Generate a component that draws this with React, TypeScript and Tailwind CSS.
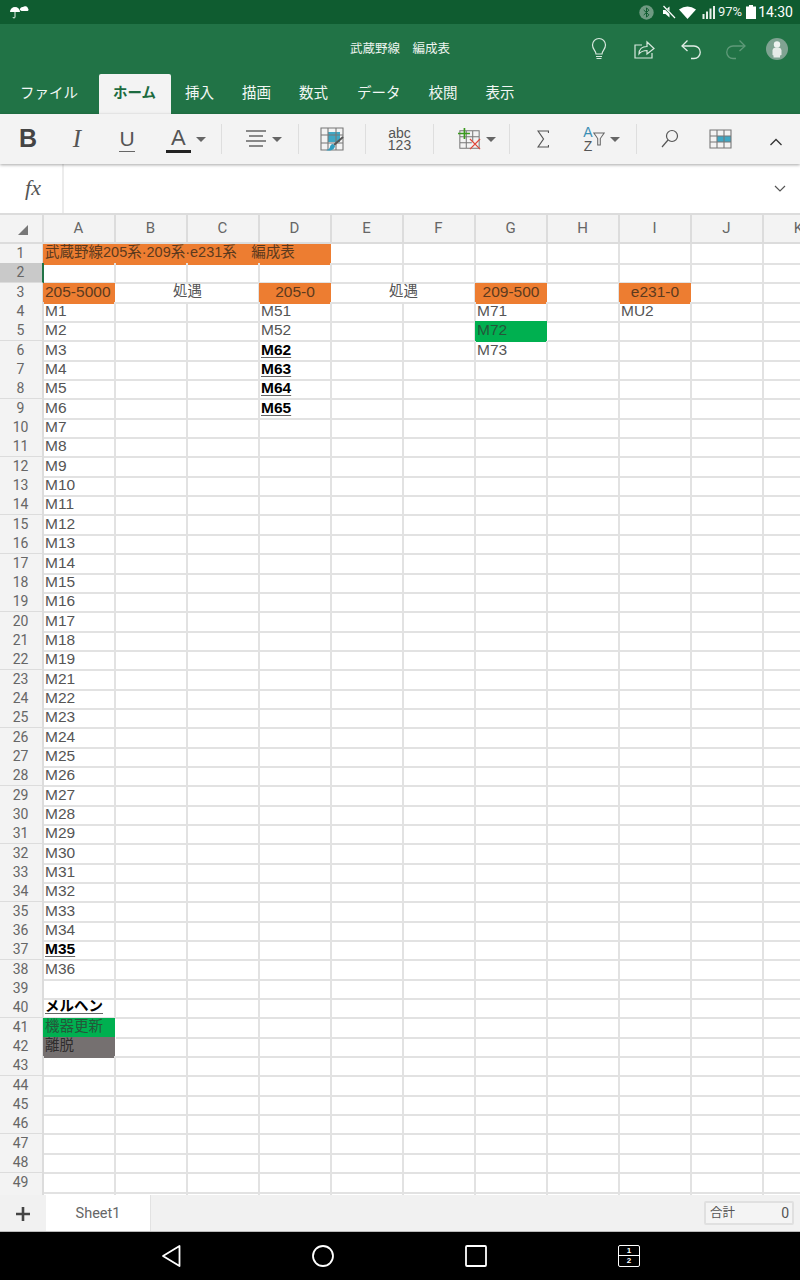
import type { ReactNode } from "react";

const sans = "font-['Liberation_Sans','Noto_Sans_CJK_JP',sans-serif]";
const ui = "font-['Roboto','Noto_Sans_CJK_JP',sans-serif]";

const COLUMNS = ["A", "B", "C", "D", "E", "F", "G", "H", "I", "J", "K"];
const TABS = ["挿入", "描画", "数式", "データ", "校閲", "表示"];

type Cell = {
  text: string;
  span?: number;
  kind?: "orange" | "green" | "gray" | "bold" | "plain";
  center?: boolean;
  cjk?: boolean;
};

const cells: Record<string, Cell> = {
  A1: { text: "武蔵野線205系·209系·e231系　編成表", span: 4, kind: "orange", cjk: true },
  A3: { text: "205-5000", kind: "orange" },
  B3: { text: "処遇", span: 2, center: true, cjk: true },
  D3: { text: "205-0", kind: "orange", center: true },
  E3: { text: "処遇", span: 2, center: true, cjk: true },
  G3: { text: "209-500", kind: "orange", center: true },
  I3: { text: "e231-0", kind: "orange", center: true },
  D4: { text: "M51" },
  D5: { text: "M52" },
  D6: { text: "M62", kind: "bold" },
  D7: { text: "M63", kind: "bold" },
  D8: { text: "M64", kind: "bold" },
  D9: { text: "M65", kind: "bold" },
  G4: { text: "M71" },
  G5: { text: "M72", kind: "green" },
  G6: { text: "M73" },
  I4: { text: "MU2" },
  A40: { text: "メルヘン", kind: "bold", cjk: true },
  A41: { text: "機器更新", kind: "green", cjk: true },
  A42: { text: "離脱", kind: "gray", cjk: true },
};

// M1〜M19, M21〜M36 (M20は欠番)
for (let row = 4; row <= 38; row++) {
  const n = row <= 22 ? row - 3 : row - 2;
  cells[`A${row}`] = { text: `M${n}`, kind: n === 35 ? "bold" : "plain" };
}

// 塗りつぶしのセルは罫線の上まで色を伸ばす
const filled = "-ml-px mr-px border-transparent pl-[2px]";
const kindClass = {
  orange: `${filled} bg-[#ed7d31] text-[#5c3a1e]`,
  green: `${filled} bg-[#00b050] text-[#24573a]`,
  gray: `${filled} bg-[#757070] text-[#2f2d2d]`,
  bold: "border-[#e2e2e2] pl-px font-bold underline decoration-[#666] underline-offset-2 text-black",
  plain: "border-[#e2e2e2] pl-px text-[#555]",
};

function SheetRow({ row }: { row: number }) {
  const out: ReactNode[] = [];
  for (let i = 0; i < COLUMNS.length; i++) {
    const key = `${COLUMNS[i]}${row}`;
    const cell = cells[key];
    const span = cell?.span ?? 1;
    out.push(
      <div
        key={key}
        style={{ gridColumn: `span ${span}` }}
        className={`h-full overflow-hidden whitespace-nowrap border-r-2 border-b-2 leading-[17px] ${sans} ${kindClass[cell?.kind ?? "plain"]} ${cell?.center ? "text-center" : ""} ${cell?.cjk ? "text-[14.5px]" : "text-[15.5px]"}`}
      >
        {cell?.text}
      </div>,
    );
    i += span - 1;
  }
  return (
    <div className="grid h-[19.35px] w-[836px] shrink-0 grid-cols-[44px_repeat(11,72px)]">
      <div
        className={`h-full border-r-2 border-b-2 border-[#dcdcdc] pr-px text-center text-[14px] leading-[19px] text-[#666] ${ui} ${row === 2 ? "border-r-[#217346] bg-[#c9c9c9]" : "bg-[#f3f3f3]"}`}
      >
        {row}
      </div>
      {out}
    </div>
  );
}

function Caret() {
  return <span className="ml-[5px] h-0 w-0 border-x-[5px] border-t-[5px] border-x-transparent border-t-[#666]" />;
}

function Sep() {
  return <span className="h-[30px] w-[1px] shrink-0 bg-[#dedede]" />;
}

function StatusBar() {
  return (
    <div className={`flex h-[24px] shrink-0 items-center bg-[#0f5c30] pl-[10px] pr-[7px] text-[14px] text-white ${ui}`}>
      <svg width="19" height="13" viewBox="0 0 19 13" fill="white">
        <path d="M0 6a5 5 0 0 1 10 0z" />
        <path d="M5 6v5a1 1 0 0 1-2 0" stroke="white" strokeWidth="0.9" fill="none" />
        <path d="M10 4a2.6 2.6 0 0 1 3-3 3 3 0 0 1 5 1.500 1.500 1.500 0 0 1-.5 2.500h-6z" />
      </svg>
      <div className="ml-auto flex items-center">
        <svg width="15" height="15" viewBox="0 0 15 15">
          <circle cx="7.500" cy="7.500" r="7.200" fill="#6f9a82" />
          <path d="M4.700 5l5.200 4.800-2.400 2.400V2.800l2.400 2.400-5.200 4.800" stroke="#0f5c30" strokeWidth="1" fill="none" />
        </svg>
        <svg className="ml-[8px]" width="14" height="14" viewBox="0 0 14 14" fill="white">
          <path d="M1 5h2.500L7.500 1.500v11L3.500 9H1z" />
          <path d="M1 1l12 12" stroke="#0f5c30" strokeWidth="2.400" />
          <path d="M1.500 1l11.500 12" stroke="white" strokeWidth="1.200" />
        </svg>
        <svg className="ml-[3px]" width="17" height="13" viewBox="0 0 17 13" fill="white">
          <path d="M0 3.500Q8.500-2.500 17 3.500L8.500 13z" />
        </svg>
        <svg className="ml-[6px]" width="15" height="15" viewBox="0 0 15 15" fill="#e8efe9">
          <rect x="0.500" y="9" width="2" height="5" />
          <rect x="4" y="6.500" width="2" height="7.500" />
          <rect x="7.500" y="3.500" width="2" height="10.500" />
          <rect x="11" y="1" width="2" height="13" />
        </svg>
        <span className="ml-[1px] text-[13px] text-[#eef5f0]">97%</span>
        <svg className="ml-[4px]" width="10" height="14" viewBox="0 0 10 14" fill="white">
          <path d="M3 0h4v1.500h3V14H0V1.500h3z" />
        </svg>
        <span className="ml-[2px]">14:30</span>
      </div>
    </div>
  );
}

function TitleBar() {
  return (
    <div className="relative flex h-[50px] shrink-0 items-center justify-center bg-[#217346]">
      <span className={`text-[12.500px] text-[#eef5f0] ${ui}`}>武蔵野線　編成表</span>
      <div className="absolute right-[12px] top-[12px] flex items-center">
        <svg width="22" height="26" viewBox="0 0 22 26" fill="none" stroke="#d8e8de" strokeWidth="1.200" className="mr-[23px]">
          <path d="M8 18c0-3-3.500-4.500-3.500-9a6.500 6.500 0 0 1 13 0c0 4.500-3.500 6-3.500 9z" />
          <path d="M8 20.500h6M8.500 22.500h5" />
        </svg>
        <svg width="24" height="24" viewBox="0 0 24 24" fill="none" stroke="#d8e8de" strokeWidth="1.200" className="mr-[23px]">
          <path d="M9 8H2v13h17v-5" />
          <path d="M6 17c0-5 3-7.500 8-7.500V5l7 6.500-7 5.500v-3.500c-3 0-6 1-8 3.500z" />
        </svg>
        <svg width="22" height="22" viewBox="0 0 22 22" fill="none" stroke="#e2eee7" strokeWidth="1.300" className="mr-[23px]">
          <path d="M7.500 2.500L2 8l5.500 5" />
          <path d="M2.500 8H14a6 6 0 0 1 0 12.500h-3" />
        </svg>
        <svg width="22" height="22" viewBox="0 0 22 22" fill="none" stroke="#5f9a79" strokeWidth="1.300" className="mr-[19px]">
          <path d="M14.500 2.500L20 8l-5.500 5" />
          <path d="M19.500 8H8a6 6 0 0 0 0 12.500h3" />
        </svg>
        <svg width="22" height="22" viewBox="0 0 22 22">
          <circle cx="11" cy="11" r="11" fill="#7fa392" />
          <circle cx="11" cy="6.500" r="3.200" fill="#eef2f0" />
          <path d="M6.500 17v-5a3 3 0 0 1 3-2.500h3a3 3 0 0 1 3 2.500v5l-1.500.500v2h-6.500v-2z" fill="#e6ebe8" />
        </svg>
      </div>
    </div>
  );
}

function TabBar() {
  return (
    <div className={`flex h-[40px] shrink-0 items-end bg-[#217346] pl-[6px] text-[14.500px] leading-[40px] text-[#f2f7f4] ${ui}`}>
      <span className="mr-[7px] px-[14px]">ファイル</span>
      <span className="rounded-t-[2px] bg-[#f3f3f3] pl-[14px] pr-[15px] font-bold text-[#1d6b40]">ホーム</span>
      {TABS.map((t) => (
        <span key={t} className={`px-[14px] ${t === "データ" ? "ml-px" : ""}`}>
          {t}
        </span>
      ))}
    </div>
  );
}

function Ribbon() {
  return (
    <div className="z-10 flex h-[50px] shrink-0 items-center bg-[#f3f3f3] text-[#555] shadow-[0_1px_3px_rgba(0,0,0,0.35)]">
      <span className={`w-[56px] text-center text-[25px] font-bold text-[#444] ${sans}`}>B</span>
      <span className="w-[42px] text-center font-['Liberation_Serif',serif] text-[25px] italic">I</span>
      <span className="flex w-[58px] justify-center">
        <span className={`border-b-[1.500px] border-[#666] text-[21px] leading-[24px] ${sans}`}>U</span>
      </span>
      <span className="flex w-[65px] items-center pl-[10px]">
        <span className={`border-b-[3px] border-[#222] px-[5px] text-[22px] leading-[24px] ${sans}`}>A</span>
        <Caret />
      </span>
      <Sep />
      <span className="flex w-[76px] items-center justify-center pl-[6px]">
        <svg width="22" height="20" viewBox="0 0 22 20" stroke="#666" strokeWidth="1.300">
          <path d="M1 2h20M4 7h14M1 12h20M4 17h14" />
        </svg>
        <Caret />
      </span>
      <Sep />
      <span className="flex w-[66px] justify-center">
        <svg width="24" height="24" viewBox="0 0 24 24" fill="none">
          <rect x="8" y="5" width="12" height="10" fill="#3fa7c4" />
          <path d="M1 1h22v22H1zM1 8h22M1 16h22M8 1v22M16 1v22" stroke="#777" strokeWidth="1.100" />
          <path d="M23 10l-9 8" stroke="#555" strokeWidth="2" />
          <path d="M13 17c-2 0-3 2-3 3-.500 2-2 3-4 3 3 1 8 1 9-4z" fill="#2f9dc0" />
        </svg>
      </span>
      <Sep />
      <span className={`flex w-[67px] flex-col items-center text-[14px] leading-[12px] text-[#555] ${sans}`}>
        <span>abc</span>
        <span>123</span>
      </span>
      <Sep />
      <span className="flex w-[75px] items-center justify-center pl-[10px]">
        <svg width="23" height="25" viewBox="0 0 25 25" fill="none">
          <path d="M2 3h21v19H2zM2 9.500h21M2 16h13M9 3v19M16 3v12" stroke="#777" strokeWidth="1.100" />
          <path d="M7 0v12M0 6h13" stroke="#3b9a1e" strokeWidth="1.800" />
          <path d="M13 12l11 11M24 12L13 23" stroke="#e0473a" strokeWidth="1.300" />
        </svg>
        <Caret />
      </span>
      <Sep />
      <span className="flex w-[66px] justify-center">
        <svg width="12" height="18" viewBox="0 0 12 18" fill="none" stroke="#555" strokeWidth="1.200">
          <path d="M11.500 3V1H1l5.500 8L1 17h10.500v-2" />
        </svg>
      </span>
      <span className="flex w-[60px] items-center pl-[7px]">
        <span className={`flex w-[10px] flex-col text-center text-[14px] leading-[14px] ${sans}`}>
          <span className="text-[#3a8fb5]">A</span>
          <span>Z</span>
        </span>
        <svg width="12" height="18" viewBox="0 0 14 18" fill="none" stroke="#666" strokeWidth="1.200">
          <path d="M1 2h12L8.500 8.500V16h-3V8.500z" />
        </svg>
        <Caret />
      </span>
      <Sep />
      <span className="flex w-[66px] justify-center">
        <svg width="18" height="20" viewBox="0 0 18 20" fill="none" stroke="#555" strokeWidth="1.200">
          <circle cx="11" cy="7" r="5.500" />
          <path d="M7 11l-6 7" />
        </svg>
      </span>
      <span className="flex w-[34px] justify-center">
        <svg width="23" height="20" viewBox="0 0 23 20" fill="none">
          <rect x="8" y="7" width="14" height="6" fill="#3fa7c4" />
          <path d="M1 1h21v18H1zM1 7h21M1 13h21M8 1v18M15 1v18" stroke="#777" strokeWidth="1.100" />
        </svg>
      </span>
      <span className="ml-auto mr-[17px] mt-[6px]">
        <svg width="14" height="8" viewBox="0 0 14 8" fill="none" stroke="#333" strokeWidth="1.300">
          <path d="M1.500 7L7 1.500 12.500 7" />
        </svg>
      </span>
    </div>
  );
}

function FormulaBar() {
  return (
    <div className="flex h-[51px] shrink-0 items-center border-b-2 border-[#dcdcdc] bg-white">
      <span className="flex h-full w-[64px] items-center justify-center border-r-2 border-[#ececec] pl-[4px] pb-[2px] font-['Liberation_Serif',serif] text-[22px] italic text-[#555]">
        fx
      </span>
      <svg className="ml-auto mr-[14px]" width="12" height="7" viewBox="0 0 12 7" fill="none" stroke="#555" strokeWidth="1.200">
        <path d="M1 1l5 5 5-5" />
      </svg>
    </div>
  );
}

function ColumnHeader() {
  return (
    <div className="grid h-[29px] w-[836px] shrink-0 grid-cols-[44px_repeat(11,72px)] bg-[#f3f3f3]">
      <div className="flex items-center justify-center border-r-2 border-b-2 border-[#dcdcdc]">
        <span className="mt-[3px] ml-[4px] h-0 w-0 border-b-[10px] border-l-[10px] border-b-[#777] border-l-transparent" />
      </div>
      {COLUMNS.map((c) => (
        <div key={c} className={`border-r-2 border-b-2 border-[#dcdcdc] pr-px text-center text-[15px] leading-[27px] text-[#666] ${ui}`}>
          {c}
        </div>
      ))}
    </div>
  );
}

function SheetTabs() {
  return (
    <div className="flex h-[37px] shrink-0 items-stretch border-b border-[#bbb] bg-[#f1f1f1]">
      <span className="flex w-[46px] items-center justify-center pt-[2px]">
        <svg width="14" height="14" viewBox="0 0 14 14" stroke="#444" strokeWidth="2.600">
          <path d="M7 0v14M0 7h14" />
        </svg>
      </span>
      <span className={`flex w-[105px] items-center justify-center border-r border-[#e2e2e2] bg-white pt-[2px] text-[14.500px] text-[#666] ${ui}`}>
        Sheet1
      </span>
      <span className={`my-auto ml-auto mr-[6px] flex h-[24px] w-[90px] items-center justify-between rounded-[2px] border-2 border-[#e0e0e0] bg-[#f4f4f4] pl-[4px] pr-[3px] pt-px text-[#555] ${ui}`}>
        <span className="text-[12.500px]">合計</span>
        <span className="text-[14px]">0</span>
      </span>
    </div>
  );
}

function NavBar() {
  return (
    <div className="flex h-[48px] shrink-0 items-center bg-black">
      <svg className="ml-[161px]" width="20" height="24" viewBox="0 0 20 24" fill="none" stroke="white" strokeWidth="1.800" strokeLinejoin="round">
        <path d="M18.500 2v20L2 12z" />
      </svg>
      <svg className="ml-[130px]" width="24" height="24" viewBox="0 0 24 24" fill="none" stroke="white" strokeWidth="1.800">
        <circle cx="12" cy="12" r="10" />
      </svg>
      <svg className="ml-[129px]" width="24" height="24" viewBox="0 0 24 24" fill="none" stroke="white" strokeWidth="1.800">
        <rect x="2" y="2" width="20" height="20" rx="1" />
      </svg>
      <span className={`ml-[130px] flex h-[22px] w-[22px] flex-col rounded-[2px] border-[1.500px] border-white text-center text-[8px] font-bold leading-[9px] text-white ${sans}`}>
        <span className="h-[10px] border-b-[1.500px] border-white">1</span>
        <span>2</span>
      </span>
    </div>
  );
}

export default function App() {
  const rows = Array.from({ length: 50 }, (_, i) => i + 1);
  return (
    <div className="flex h-[1280px] w-[800px] flex-col overflow-hidden bg-white">
      <StatusBar />
      <TitleBar />
      <TabBar />
      <Ribbon />
      <FormulaBar />
      <ColumnHeader />
      <div className="min-h-0 flex-1 overflow-hidden">
        {rows.map((r) => (
          <SheetRow key={r} row={r} />
        ))}
      </div>
      <SheetTabs />
      <NavBar />
    </div>
  );
}
